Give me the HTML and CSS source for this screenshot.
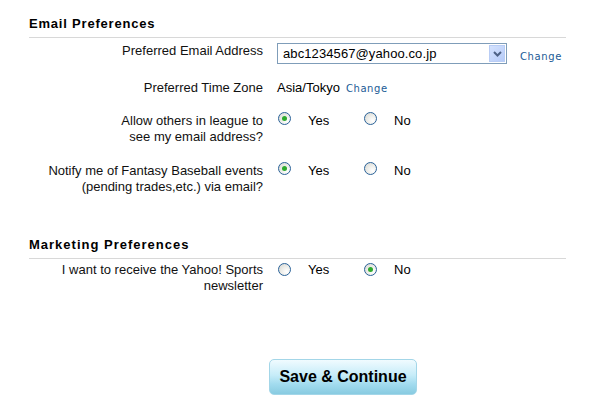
FILE: index.html
```html
<!DOCTYPE html>
<html>
<head>
<meta charset="utf-8">
<link rel="stylesheet" href="styles.css">
</head>
<body>
<div class="page">
  <section class="section">
    <h2 class="section-title">Email Preferences</h2>
    <div class="rows">
      <div class="row row-email">
        <div class="label">Preferred Email Address</div>
        <div class="control">
          <div class="select">
            <span class="select-value">abc1234567@yahoo.co.jp</span>
            <span class="select-btn">
              <svg width="9" height="6" viewBox="0 0 9 6"><path d="M1 1 L4.5 4.5 L8 1" fill="none" stroke="#4d6185" stroke-width="2"/></svg>
            </span>
          </div>
          <a class="change change-email" href="#">Change</a>
        </div>
      </div>
      <div class="row">
        <div class="label">Preferred Time Zone</div>
        <div class="control control-text">
          <span class="value">Asia/Tokyo</span>
          <a class="change" href="#">Change</a>
        </div>
      </div>
      <div class="row row-radio">
        <div class="label">Allow others in league to<br>see my email address?</div>
        <div class="control radios">
          <label class="option"><span class="radio checked"></span><span>Yes</span></label>
          <label class="option"><span class="radio"></span><span>No</span></label>
        </div>
      </div>
      <div class="row row-radio">
        <div class="label">Notify me of Fantasy Baseball events<br>(pending trades,etc.) via email?</div>
        <div class="control radios">
          <label class="option"><span class="radio checked"></span><span>Yes</span></label>
          <label class="option"><span class="radio"></span><span>No</span></label>
        </div>
      </div>
    </div>
  </section>
  <section class="section section-marketing">
    <h2 class="section-title title-wide">Marketing Preferences</h2>
    <div class="rows rows-marketing">
      <div class="row row-radio">
        <div class="label">I want to receive the Yahoo! Sports<br>newsletter</div>
        <div class="control radios radios-low">
          <label class="option"><span class="radio"></span><span>Yes</span></label>
          <label class="option"><span class="radio checked"></span><span>No</span></label>
        </div>
      </div>
    </div>
  </section>
  <div class="actions">
    <button class="save-btn" type="button">Save &amp; Continue</button>
  </div>
</div>
</body>
</html>
```

FILE: styles.css
```css
html, body {
  margin: 0;
  padding: 0;
  background: #ffffff;
}
body {
  font-family: "Liberation Sans", Arial, sans-serif;
  font-size: 13px;
  line-height: 16px;
  color: #000;
}
.page {
  width: 537px;
  padding: 16px 0 0 29px;
}
.section-title {
  margin: 0;
  font-size: 13px;
  line-height: 16px;
  font-weight: bold;
  letter-spacing: 0.8px;
  color: #000;
  padding-bottom: 5px;
  border-bottom: 1px solid #d8d8d8;
}
.title-wide {
  letter-spacing: 1px;
}
.rows {
  display: flex;
  flex-direction: column;
  gap: 16px;
  padding-top: 5px;
}
.rows-marketing {
  padding-top: 3px;
}
.row {
  display: grid;
  grid-template-columns: 234px 1fr;
  column-gap: 14px;
  align-items: start;
}
.row-radio {
  min-height: 34px;
}
.label {
  text-align: right;
  color: #111;
}
.control {
  display: flex;
  align-items: flex-start;
}
.control-text {
  align-items: baseline;
}
.select {
  box-sizing: border-box;
  width: 230px;
  height: 21px;
  border: 1px solid #7f9db9;
  display: flex;
  align-items: center;
  justify-content: space-between;
  padding: 0 1px 0 5px;
}
.select-value {
  letter-spacing: 0.1px;
  line-height: 16px;
  padding-top: 1px;
}
.select-btn {
  box-sizing: border-box;
  width: 16px;
  height: 17px;
  border: 1px solid #b9cdf5;
  background: linear-gradient(135deg, #d4e2fe, #b6cbf8);
  display: flex;
  align-items: center;
  justify-content: center;
}
.change {
  font-family: "DejaVu Sans", Verdana, sans-serif;
  font-size: 10px;
  letter-spacing: 0.6px;
  color: #1b5b96;
  text-decoration: none;
}
.change-email {
  margin-left: 13px;
  margin-top: 8px;
  line-height: 12px;
}
.control-text .change {
  margin-left: 6px;
}
.radios {
  padding-left: 1px;
}
.option {
  display: flex;
  align-items: flex-start;
  gap: 17px;
  width: 86px;
}
.radio {
  box-sizing: border-box;
  width: 13px;
  height: 13px;
  margin-top: -1px;
  border-radius: 50%;
  border: 1px solid #2a6299;
  background: radial-gradient(circle at 70% 70%, #ffffff 0%, #eeeeea 45%, #d5d5cf 100%);
  display: flex;
  align-items: center;
  justify-content: center;
}
.radios-low .radio {
  margin-top: 1px;
}
.radio.checked::after {
  content: "";
  width: 5px;
  height: 5px;
  border-radius: 50%;
  background: #2eaa2e;
}
.section-marketing {
  margin-top: 40px;
}
.actions {
  padding: 63px 0 0 240px;
}
.save-btn {
  box-sizing: border-box;
  width: 148px;
  height: 36px;
  border: 1px solid #a3d6e8;
  border-radius: 5px;
  background: linear-gradient(#f0fbff 0%, #c6ecf8 45%, #a3dcef 70%, #88cbe1 100%);
  font-family: "Liberation Sans", Arial, sans-serif;
  font-size: 16px;
  font-weight: bold;
  color: #000;
  padding: 0;
}
```
